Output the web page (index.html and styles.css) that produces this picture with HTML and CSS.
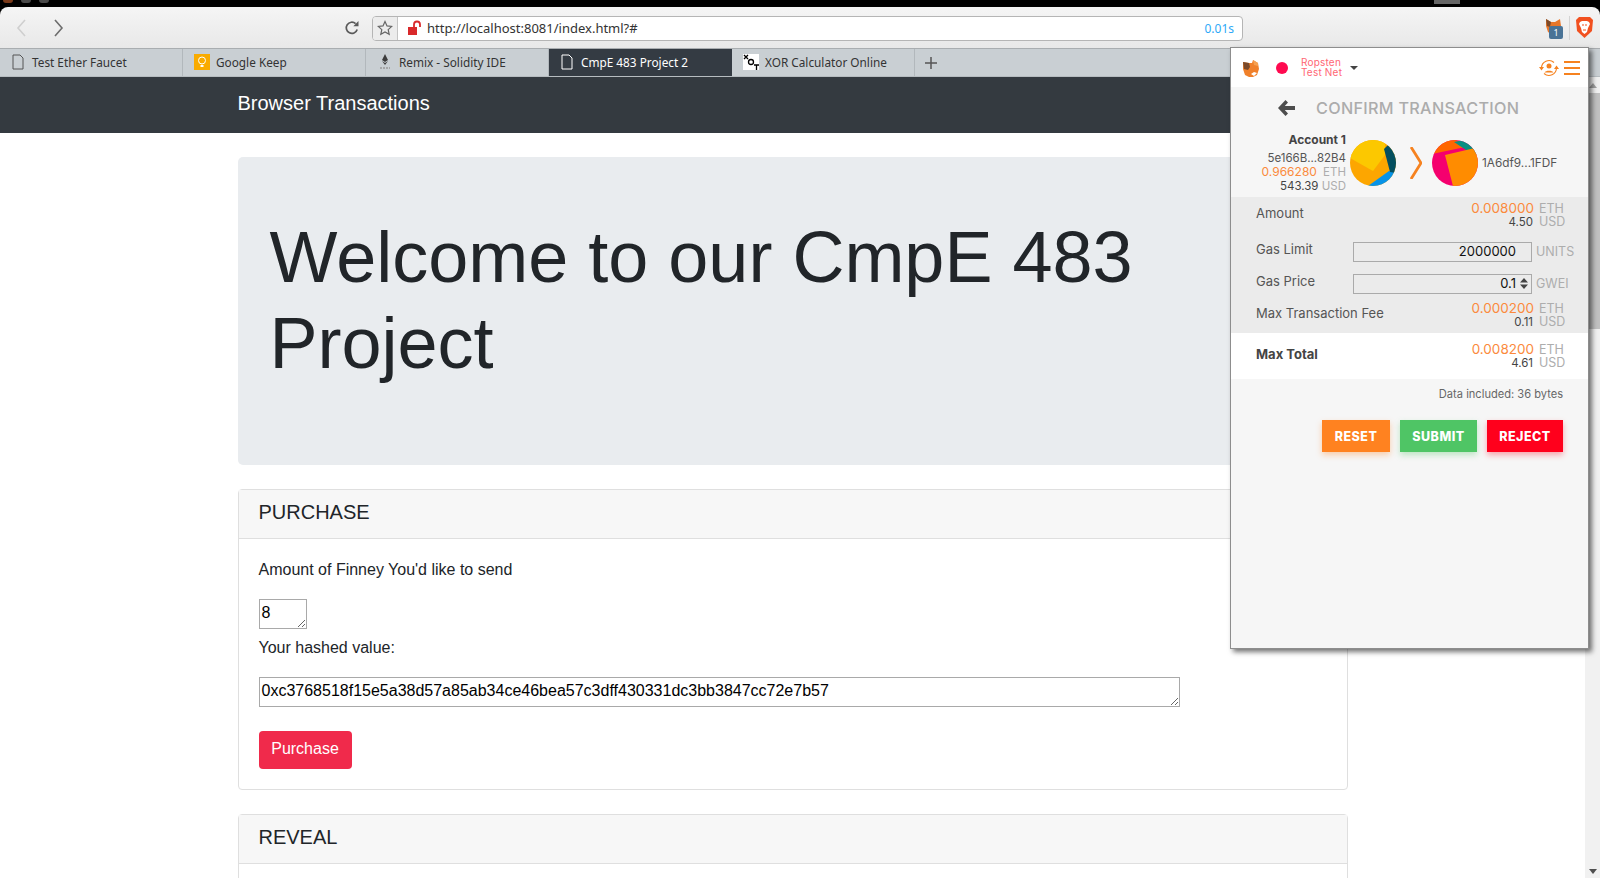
FILE: index.html
```html
<!DOCTYPE html>
<html lang="en">
<head>
<meta charset="utf-8">
<title>CmpE 483 Project 2</title>
<link rel="stylesheet" href="styles.css">
</head>
<body>
<div class="strip">
  <span class="winbtn winbtn-a"></span><span class="winbtn"></span><span class="winbtn"></span>
  <span class="stripbox"></span>
</div>
<header class="toolbar">
  <div class="nav-btns">
    <svg class="chev chev-off" width="12" height="20" viewBox="0 0 12 20"><path d="M10 2 3 10l7 8" fill="none" stroke="currentColor" stroke-width="1.6"/></svg>
    <svg class="chev" width="12" height="20" viewBox="0 0 12 20"><path d="M2 2l7 8-7 8" fill="none" stroke="currentColor" stroke-width="1.6"/></svg>
  </div>
  <svg class="reload" width="16" height="16" viewBox="0 0 16 16"><path d="M13.2 9.5A5.6 5.6 0 1 1 11.6 3.6" fill="none" stroke="#5a5a5a" stroke-width="1.7"/><path d="M9.3 6.2h5.2V1z" fill="#5a5a5a"/></svg>
  <div class="omnibox">
    <div class="starbox"><svg width="16" height="16" viewBox="0 0 16 16"><path d="M8 1.5l2 4.4 4.7.5-3.5 3.2 1 4.7L8 11.9l-4.2 2.4 1-4.7L1.300 6.400l4.700-.5z" fill="none" stroke="#666" stroke-width="1.200"/></svg></div>
    <svg class="lock" width="16" height="16" viewBox="0 0 16 16"><rect x="1" y="7" width="9" height="8" fill="#d9292b"/><path d="M7 7V4.500a3 3 0 0 1 6 0V7" fill="none" stroke="#d9292b" stroke-width="1.800"/></svg>
    <span class="url">http://localhost:8081/index.html?#</span>
    <span class="timing">0.01s</span>
  </div>
  <div class="exts">
    <div class="ext-fox">
      <svg width="18" height="18" viewBox="0 0 18 18"><path d="M2 2l5 3h4l5-3 1 7-2 6-4 2H7l-3-2-2-6z" fill="#e8772a"/><path d="M2 2l5 3-1 5-3-1z" fill="#7b4a2a"/></svg>
      <span class="badge">1</span>
    </div>
    <span class="ext-sep"></span>
    <svg class="brave" width="19" height="23" viewBox="0 0 19 23"><path d="M4 1h11l3 3-1 11-7.500 7L2 15 1 4z" fill="#f1501f"/><path d="M5 6l2-1h5l2 1 1 2-2 4-1 4-2.500 2L7 16l-1-4-2-4z" fill="#fff"/><path d="M7 9h2M10 9h2M8 14h3" stroke="#f1501f" stroke-width="1.200"/></svg>
  </div>
</header>
<nav class="tabs">
  <div class="tab">
    <svg class="favicon favicon-doc" width="14" height="16" viewBox="0 0 14 16"><path d="M2 1h7l3 3v11H2z" fill="none" stroke="#555"/></svg>
    <span>Test Ether Faucet</span>
  </div>
  <div class="tab">
    <svg class="favicon" width="16" height="16" viewBox="0 0 16 16"><rect width="16" height="16" fill="#f9ab00"/><circle cx="8" cy="6.500" r="3.500" fill="none" stroke="#fff"/><path d="M6.500 11h3v2h-3z" fill="#fff"/></svg>
    <span>Google Keep</span>
  </div>
  <div class="tab">
    <svg class="favicon" width="16" height="16" viewBox="0 0 16 16"><path d="M8 0l3 6-3 2-3-2zM5 7l3 2 3-2-3 4z" fill="#3c3c3c"/><path d="M3 14h10" stroke="#999" stroke-width="1.500" stroke-dasharray="2 1"/></svg>
    <span>Remix - Solidity IDE</span>
  </div>
  <div class="tab tab-active">
    <svg class="favicon favicon-doc" width="14" height="16" viewBox="0 0 14 16"><path d="M2 1h7l3 3v11H2z" fill="none" stroke="#fff"/></svg>
    <span>CmpE 483 Project 2</span>
  </div>
  <div class="tab">
    <svg class="favicon" width="16" height="16" viewBox="0 0 16 16"><rect width="16" height="16" fill="#fff"/><path d="M1 1l4 4M5 1L1 5" stroke="#000" stroke-width="1.300"/><circle cx="8" cy="8" r="2.500" fill="none" stroke="#000" stroke-width="1.300"/><path d="M11 11h5M13.500 11v5" stroke="#000" stroke-width="1.300"/></svg>
    <span>XOR Calculator Online</span>
  </div>
  <svg class="newtab" width="14" height="14" viewBox="0 0 14 14"><path d="M7 1v12M1 7h12" stroke="#555" stroke-width="1.500"/></svg>
</nav>
<div class="window">
  <main class="viewport">
    <div class="navbar"><div class="container"><span class="brand">Browser Transactions</span></div></div>
    <div class="container">
      <section class="jumbotron"><h1 class="display">Welcome to our CmpE 483 Project</h1></section>
      <section class="card">
        <div class="card-header">PURCHASE</div>
        <div class="card-body">
          <p class="field-label">Amount of Finney You'd like to send</p>
          <textarea class="ta ta-small" readonly>8</textarea>
          <p class="field-label">Your hashed value:</p>
          <textarea class="ta ta-wide" readonly>0xc3768518f15e5a38d57a85ab34ce46bea57c3dff430331dc3bb3847cc72e7b57</textarea>
          <button class="btn-purchase" type="button">Purchase</button>
        </div>
      </section>
      <section class="card">
        <div class="card-header">REVEAL</div>
        <div class="card-body"></div>
      </section>
    </div>
  </main>
  <aside class="scrollbar">
    <span class="sb-up"></span>
    <span class="sb-thumb"></span>
    <span class="sb-down"></span>
  </aside>
</div>

<div class="popup">
  <div class="mm-head">
    <svg class="mm-fox" width="18" height="18" viewBox="0 0 18 18"><path d="M1 3l6 1h3l1-3 5 3 1 6-2 6-4 2H7l-4-2-2-6z" fill="#f0802a"/><path d="M1 3l6 1 1 4-2 3-4-1z" fill="#7a4a2c"/><path d="M11 1l5 3v3l-4-1z" fill="#f5a050"/><path d="M9 15l3-2 3 1-3 3z" fill="#fff"/></svg>
    <span class="mm-dot"></span>
    <span class="mm-net">Ropsten<br>Test Net</span>
    <span class="mm-caret"></span>
    <svg class="mm-swap" width="20" height="20" viewBox="0 0 20 20"><path d="M2.500 10A7.500 7.500 0 0 1 15 4.500M17.500 10A7.500 7.500 0 0 1 5 15.500" fill="none" stroke="#f6821f" stroke-width="1.100"/><path d="M0 9h5l-2.500 3.500zM15 11h5l-2.500-3.500z" fill="#f6821f"/><circle cx="10" cy="8" r="2.500" fill="#f6821f"/><path d="M5.500 14.500c1-2.500 8-2.500 9 0z" fill="#f6821f"/></svg>
    <span class="mm-menu"><i></i><i></i><i></i></span>
  </div>
  <div class="mm-title">
    <svg width="19" height="18" viewBox="0 0 19 18"><path d="M8.500 1 1 9l7.500 8 2.500-2.500L7.800 11H18V7H7.800L11 3.500z" fill="#4d4d4d"/></svg>
    <span>CONFIRM TRANSACTION</span>
  </div>
  <div class="mm-parties">
    <div class="mm-from">
      <div class="mm-accname">Account 1</div>
      <div class="mm-addr">5e166B...82B4</div>
      <div><span class="mm-orange">0.966280</span> <span class="mm-unit mm-gap">ETH</span></div>
      <div><span class="mm-dark">543.39</span> <span class="mm-unit">USD</span></div>
    </div>
    <svg class="mm-ident" width="46" height="46" viewBox="0 0 46 46">
      <defs><clipPath id="clip-a"><circle cx="23" cy="23" r="23"/></clipPath><clipPath id="clip-b"><circle cx="23" cy="23" r="23"/></clipPath></defs>
      <g clip-path="url(#clip-a)">
        <rect width="46" height="46" fill="#fda600"/>
        <path d="M0 18l23 13 12-16V0H0z" fill="#fcc800"/>
        <path d="M18 46l21-15 7 2v13z" fill="#0793e8"/>
        <path d="M34 9l5-5 7 10v19l-6-1z" fill="#034f5f"/>
      </g>
    </svg>
    <svg class="mm-arrow" width="12" height="32" viewBox="0 0 12 32"><path d="M1 0l10 16L1 32" fill="none" stroke="#f6821f" stroke-width="2.800"/></svg>
    <svg class="mm-ident mm-ident-to" width="46" height="46" viewBox="0 0 46 46">
      <g clip-path="url(#clip-b)">
        <rect width="46" height="46" fill="#f5006e"/>
        <path d="M0 14l38-8L23 0H0z" fill="#ff6600"/>
        <path d="M22 2l10-2 14 12-3 4z" fill="#0a8f82"/>
        <path d="M13 15l30-7 7 7v35H22z" fill="#ff8c00"/>
      </g>
    </svg>
    <div class="mm-to">1A6df9...1FDF</div>
  </div>
  <div class="mm-details">
    <div class="mm-row mm-row-amount">
      <span class="mm-label mm-label-up">Amount</span>
      <div class="mm-vals">
        <div class="mm-line"><span class="mm-orange">0.008000</span><span class="mm-unit mm-u">ETH</span></div>
        <div class="mm-line"><span class="mm-dark">4.50</span><span class="mm-unit mm-u">USD</span></div>
      </div>
    </div>
    <div class="mm-row mm-row-input">
      <span class="mm-label mm-label-field">Gas Limit</span>
      <div class="mm-input">2000000</div>
      <span class="mm-unit">UNITS</span>
    </div>
    <div class="mm-row mm-row-input">
      <span class="mm-label mm-label-field">Gas Price</span>
      <div class="mm-input">0.1<svg class="mm-spin" width="8" height="11" viewBox="0 0 8 11"><path d="M4 0l4 4.500H0zM4 11l4-4.500H0z" fill="#444"/></svg></div>
      <span class="mm-unit">GWEI</span>
    </div>
    <div class="mm-row mm-row-fee">
      <span class="mm-label mm-label-fee">Max Transaction Fee</span>
      <div class="mm-vals">
        <div class="mm-line"><span class="mm-orange">0.000200</span><span class="mm-unit mm-u">ETH</span></div>
        <div class="mm-line"><span class="mm-dark">0.11</span><span class="mm-unit mm-u">USD</span></div>
      </div>
    </div>
  </div>
  <div class="mm-total">
    <span class="mm-label mm-strong">Max Total</span>
    <div class="mm-vals">
      <div class="mm-line"><span class="mm-orange">0.008200</span><span class="mm-unit mm-u">ETH</span></div>
      <div class="mm-line"><span class="mm-dark">4.61</span><span class="mm-unit mm-u">USD</span></div>
    </div>
  </div>
  <div class="mm-data">Data included: 36 bytes</div>
  <div class="mm-actions">
    <button class="mm-btn mm-reset" type="button">RESET</button>
    <button class="mm-btn mm-submit" type="button">SUBMIT</button>
    <button class="mm-btn mm-reject" type="button">REJECT</button>
  </div>
</div>
</body>
</html>
```
FILE: styles.css
```css
* { box-sizing: border-box; }
html, body { margin: 0; height: 878px; overflow: hidden; background: #000; }
body { font-family: "Liberation Sans", Arial, sans-serif; display: flex; flex-direction: column; position: relative; }

.strip { height: 7px; background: #000; display: flex; align-items: flex-start; padding-left: 3px; gap: 8px; flex: none; }
.winbtn { width: 10px; height: 3px; border-radius: 0 0 5px 5px; background: #4a4a4a; }
.winbtn-a { background: #7a3a1a; }
.stripbox { width: 26px; height: 4px; background: #666; margin-left: 1377px; }

.toolbar { height: 42px; flex: none; display: flex; align-items: center; background: linear-gradient(#f5f5f5, #e8e8e8); border-radius: 8px 8px 0 0; border-bottom: 1px solid #a9adb0; padding-left: 15px; }
.nav-btns { display: flex; gap: 26px; width: 329px; flex: none; }
.chev { color: #6d6d6d; display: block; }
.chev-off { color: #cfcfcf; }
.reload { margin-right: 12px; flex: none; }
.omnibox { width: 871px; height: 25px; background: #fff; border: 1px solid #b5b5b5; border-radius: 4px; display: flex; align-items: center; overflow: hidden; flex: none; margin-top: 1px; }
.starbox { width: 25px; height: 100%; background: #ececec; border-right: 1px solid #c4c4c4; display: flex; align-items: center; justify-content: center; flex: none; }
.lock { margin-left: 9px; flex: none; }
.url { font-family: "Noto Sans", sans-serif; font-size: 13px; color: #333; margin-left: 4px; }
.timing { margin-left: auto; margin-right: 8px; font-family: "Noto Sans", sans-serif; font-size: 12px; color: #2ea9f7; }
.exts { display: flex; align-items: center; margin-left: 301px; flex: none; }
.ext-fox { position: relative; width: 20px; height: 22px; }
.badge { position: absolute; left: 5px; top: 9px; width: 14px; height: 13px; background: #4a7396; color: #fff; font-family: "Noto Sans", sans-serif; font-size: 9px; line-height: 13px; text-align: center; border-radius: 2px; }
.ext-sep { width: 1px; height: 24px; background: #d4d4d4; margin: 0 5px; }

.tabs { height: 28px; flex: none; display: flex; align-items: stretch; background: #c9cfd3; border-bottom: 1px solid #b6bcc0; }
.tab { width: 183px; display: flex; align-items: center; gap: 6px; padding: 0 0 2px 11px; border-right: 1px solid #b2b8bc; font-family: "Noto Sans", sans-serif; font-size: 11.8px; color: #333; flex: none; white-space: nowrap; }
.tab-active { background: #343b43; color: #fff; border-right: none; }
.favicon { flex: none; }
.favicon-doc { margin-right: 1px; }
.newtab { align-self: center; margin-left: 9px; }

.window { flex: 1; display: flex; background: #fff; min-height: 0; }
.viewport { flex: 1; min-width: 0; overflow: hidden; }
.scrollbar { width: 15px; flex: none; background: #f1f1f1; display: flex; flex-direction: column; align-items: center; }
.sb-up { width: 0; height: 0; border: 4px solid transparent; border-top: 0; border-bottom: 5px solid #a3a3a3; margin-top: 6px; }
.sb-thumb { width: 15px; height: 236px; background: #c1c1c1; margin-top: 5px; }
.sb-down { width: 0; height: 0; border: 4px solid transparent; border-bottom: 0; border-top: 5px solid #505050; margin-top: auto; margin-bottom: 4px; }

.container { width: 1140px; margin: 0 auto; padding: 0 15px; }
.navbar { height: 56px; background: #343a40; display: flex; align-items: center; padding-bottom: 4px; }
.brand { color: #fff; font-size: 20px; }
.jumbotron { margin-top: 24px; height: 308px; padding: 57px 32px; background: #e9ecef; border-radius: 5px; }
.display { margin: 0; font-size: 72px; font-weight: 400; line-height: 86.4px; color: #212529; }
.card { margin-top: 24px; border: 1px solid #dfdfdf; border-radius: 4px; }
.card-header { height: 49px; background: #f7f7f7; border-bottom: 1px solid #dfdfdf; padding: 0 20px; font-size: 20px; line-height: 44px; color: #212529; }
.card-body { padding: 19px 20px 20px; }
.field-label { margin: 0 0 17px; font-size: 16px; line-height: 24px; color: #212529; }
.ta { display: block; border: 1px solid #a9a9a9; padding: 4px 2px 1px; font-family: "Liberation Sans", Arial, sans-serif; font-size: 16px; color: #000; background: #fff; outline: none; }
.ta-small { width: 48px; height: 30px; margin-bottom: 7px; }
.ta-wide { width: 921px; height: 30px; margin-bottom: 24px; }
.btn-purchase { display: block; width: 93px; height: 38px; border: 0; border-radius: 4px; background: #f02a4b; color: #fff; font-family: inherit; font-size: 16px; padding: 0 0 2px; }

.popup { position: absolute; left: 1230px; top: 47px; width: 359px; height: 602px; background: #f6f6f6; border: 1px solid #8d8d8d; box-shadow: 3px 3px 5px rgba(0,0,0,.55); font-family: Inter, "Noto Sans", sans-serif; color: #4d4d4d; }
.mm-head { height: 39px; background: #fff; display: flex; align-items: center; padding-left: 11px; }
.mm-fox { flex: none; }
.mm-dot { width: 12px; height: 12px; border-radius: 50%; background: #ff0a50; margin-left: 16px; flex: none; }
.mm-net { margin-left: 13px; padding-bottom: 2px; font-size: 10px; letter-spacing: .2px; line-height: 10px; color: #ff6674; white-space: nowrap; }
.mm-caret { width: 0; height: 0; border: 4px solid transparent; border-bottom: 0; border-top: 4px solid #444; margin-left: 8px; }
.mm-swap { margin-left: auto; }
.mm-menu { display: flex; flex-direction: column; gap: 4px; width: 16px; margin: 0 8px 0 5px; }
.mm-menu i { display: block; height: 2px; background: #f6821f; }
.mm-title { display: flex; align-items: center; height: 43px; padding: 0 0 2px 46px; }
.mm-title span { margin-left: 20px; font-size: 16.2px; font-weight: 500; color: #acacac; letter-spacing: .3px; white-space: nowrap; }
.mm-parties { height: 67px; display: flex; align-items: center; padding-bottom: 1px; }
.mm-from { width: 115px; flex: none; text-align: right; font-size: 11.500px; line-height: 13.500px; white-space: nowrap; }
.mm-accname { font-weight: 700; font-size: 12px; color: #444; margin-bottom: 5px; }
.mm-addr { color: #555; }
.mm-orange { color: #fb8a3c; }
.mm-from .mm-orange { font-size: 12px; }
.mm-dark { color: #444; }
.mm-unit { color: #adadad; font-size: 11.500px; }
.mm-gap { margin-left: 3px; }
.mm-ident { flex: none; margin-left: 4px; }
.mm-arrow { margin-left: 14px; flex: none; }
.mm-ident-to { margin-left: 10px; }
.mm-to { margin-left: 4px; font-size: 11.8px; color: #555; white-space: nowrap; }
.mm-details { height: 136px; background: #ebebeb; padding: 0 25px 0 25px; }
.mm-row { display: flex; justify-content: space-between; align-items: center; height: 36px; }
.mm-row-amount { padding-top: 1px; }
.mm-row-input { height: 32px; }
.mm-row-fee { height: 36px; }
.mm-label { font-size: 13px; color: #555; white-space: nowrap; }
.mm-label-up { padding-bottom: 6px; }
.mm-label-fee { padding-bottom: 4px; }
.mm-label-field { width: 97px; flex: none; }
.mm-strong { font-weight: 700; color: #444; padding-bottom: 4px; }
.mm-vals { display: flex; flex-direction: column; align-items: flex-end; line-height: 13px; }
.mm-line { display: flex; align-items: baseline; font-size: 13.5px; }
.mm-line .mm-dark { font-size: 11.500px; margin-right: 1px; }
.mm-u { margin-left: 5px; width: 24px; font-size: 12.5px; }
.mm-input { width: 179px; height: 20px; margin-top: 6px; border: 1px solid #aaa; background: #ebebeb; font-size: 13px; line-height: 17px; color: #111; text-align: right; padding-right: 15px; position: relative; flex: none; }
.mm-spin { position: absolute; right: 3px; top: 3px; }
.mm-row-input .mm-unit { margin-left: 4px; margin-top: 4px; width: 38px; flex: none; font-size: 12.5px; }
.mm-total { height: 46px; background: #fff; display: flex; justify-content: space-between; align-items: center; padding: 0 25px; }
.mm-data { text-align: right; font-size: 11.1px; color: #666; padding: 9px 25px 0 0; height: 41px; line-height: 13px; }
.mm-actions { display: flex; justify-content: flex-end; gap: 10px; padding-right: 25px; }
.mm-btn { height: 32px; border: 0; padding: 0; color: #fff; font-family: Inter, sans-serif; font-size: 12.5px; font-weight: 800; letter-spacing: .5px; }
.mm-reset { width: 68px; background: #ff8220; box-shadow: 0 3px 6px rgba(255,130,32,.35); }
.mm-submit { width: 77px; background: #4fc565; box-shadow: 0 3px 6px rgba(79,197,101,.35); }
.mm-reject { width: 76px; background: #ff001c; box-shadow: 0 3px 6px rgba(255,0,28,.35); }
```
